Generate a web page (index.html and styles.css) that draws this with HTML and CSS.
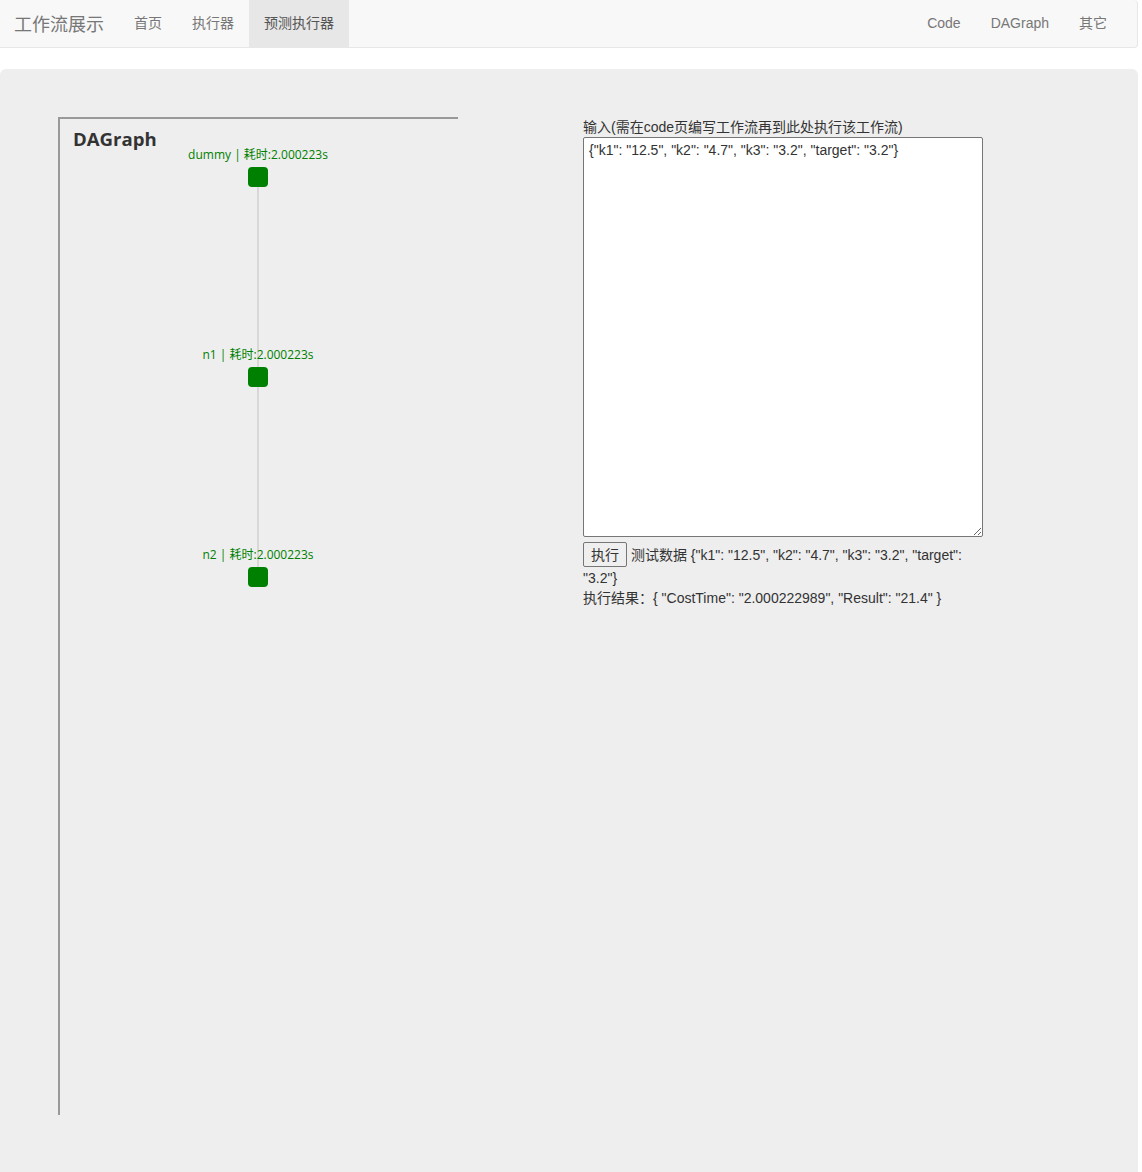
FILE: index.html
```html
<!DOCTYPE html>
<html lang="zh-CN">
<head>
<meta charset="utf-8">
<title>工作流展示</title>
<link rel="stylesheet" href="styles.css">
</head>
<body>
<div class="page">
  <nav class="navbar">
    <a class="brand" href="#">工作流展示</a>
    <ul class="nav">
      <li><a href="#">首页</a></li>
      <li><a href="#">执行器</a></li>
      <li class="active"><a href="#">预测执行器</a></li>
    </ul>
    <ul class="nav nav-right">
      <li><a href="#">Code</a></li>
      <li><a href="#">DAGraph</a></li>
      <li><a href="#">其它</a></li>
    </ul>
  </nav>

  <div class="jumbotron">
    <div class="graph">
      <div class="graph-title">DAGraph</div>
      <div class="edge"></div>
      <div class="node-label" style="top:27px">dummy | 耗时:2.000223s</div>
      <div class="node" style="top:48px"></div>
      <div class="node-label" style="top:227px">n1 | 耗时:2.000223s</div>
      <div class="node" style="top:248px"></div>
      <div class="node-label" style="top:427px">n2 | 耗时:2.000223s</div>
      <div class="node" style="top:448px"></div>
    </div>

    <div class="runner">
      <div class="input-label">输入(需在code页编写工作流再到此处执行该工作流)</div>
      <textarea class="input-box" spellcheck="false">{"k1": "12.5", "k2": "4.7", "k3": "3.2", "target": "3.2"}</textarea>
      <div class="run-line"><button class="run-btn" type="button">执行</button> 测试数据 {"k1": "12.5", "k2": "4.7", "k3": "3.2", "target": "3.2"}</div>
      <div class="result">执行结果：{ "CostTime": "2.000222989", "Result": "21.4" }</div>
    </div>
  </div>
</div>
</body>
</html>
```

FILE: styles.css
```css
html, body {
  margin: 0;
  padding: 0;
  background: #fff;
}

body {
  font-family: "Liberation Sans", Arial, "Noto Sans CJK SC", sans-serif;
  font-size: 14px;
  line-height: 20px;
  color: #333;
}

.page {
  width: 1138px;
}

a {
  text-decoration: none;
}

/* navbar */
.navbar {
  display: flex;
  align-items: stretch;
  height: 47px;
  background: #f8f8f8;
  border-bottom: 1px solid #e7e7e7;
  border-right: 1px solid #e7e7e7;
  border-radius: 0 4px 4px 0;
  padding-right: 15px;
  margin-bottom: 21px;
}

.brand {
  display: block;
  padding: 13px 15px 0 14px;
  width: 90px;
  font-size: 18px;
  line-height: 20px;
  color: #777;
  font-family: "Noto Sans CJK SC", sans-serif;
}

.nav {
  list-style: none;
  margin: 0;
  padding: 0;
  display: flex;
}

.nav-right {
  margin-left: auto;
}

.nav li a {
  display: block;
  height: 47px;
  box-sizing: border-box;
  padding: 13px 15px 0;
  color: #777;
  line-height: 20px;
}

.nav li.active a {
  background: #e7e7e7;
  color: #555;
}

/* jumbotron */
.jumbotron {
  background: #eee;
  border-radius: 6px 6px 0 0;
  padding: 48px 0 80px 58px;
  display: grid;
  grid-template-columns: 400px 400px;
  column-gap: 125px;
  align-items: start;
}

.graph {
  position: relative;
  width: 398px;
  height: 996px;
  border-top: 2px solid #999;
  border-left: 2px solid #999;
}

.graph-title {
  position: absolute;
  left: 13px;
  top: 8px;
  font-family: "Open Sans", "Noto Sans CJK SC", sans-serif;
  font-weight: 700;
  font-size: 18.6px;
  line-height: 24px;
  color: #333;
}

.edge {
  position: absolute;
  left: 197px;
  top: 58px;
  width: 2px;
  height: 400px;
  background: #d8d8d8;
}

.node {
  position: absolute;
  left: 188px;
  width: 20px;
  height: 20px;
  border-radius: 4px;
  background: #008000;
}

.node-label {
  position: absolute;
  left: 98px;
  width: 200px;
  text-align: center;
  font-family: "Open Sans", "Noto Sans CJK SC", sans-serif;
  font-size: 12px;
  line-height: 18px;
  color: #008000;
}

/* runner */
.input-label {
  line-height: 20px;
}

.input-box {
  display: block;
  width: 400px;
  height: 400px;
  box-sizing: border-box;
  margin: 0;
  padding: 3px 5px;
  border: 1px solid #767676;
  border-radius: 2px;
  background: #fff;
  font-family: "Liberation Sans", Arial, "Noto Sans CJK SC", sans-serif;
  font-size: 14px;
  line-height: 18px;
  color: #333;
  resize: vertical;
}

.run-line {
  margin-top: 5px;
  line-height: 20px;
}

.run-btn {
  display: inline-block;
  vertical-align: baseline;
  margin: 0 0 1px;
  padding: 1px 7px;
  height: 25px;
  box-sizing: border-box;
  border: 1px solid #767676;
  border-radius: 2px;
  background: #efefef;
  font-family: "Liberation Sans", Arial, "Noto Sans CJK SC", sans-serif;
  font-size: 14px;
  line-height: 20px;
  color: #333;
}

.result {
  line-height: 20px;
}
```
